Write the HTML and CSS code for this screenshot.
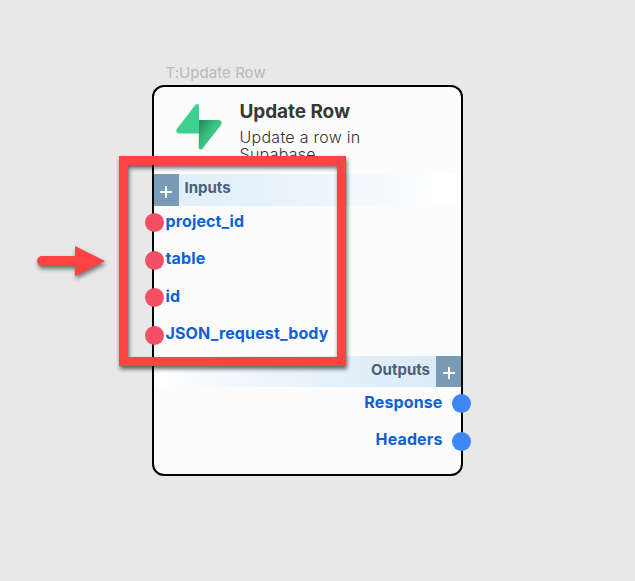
FILE: index.html
```html
<!DOCTYPE html>
<html lang="en">
<head>
<meta charset="utf-8">
<title>Update Row</title>
<link rel="stylesheet" href="styles.css">
</head>
<body>
<main class="canvas">
  <div class="node-label">T:Update Row</div>
  <section class="node">
    <header class="node-header">
      <svg class="logo" viewBox="0 0 46 48" width="46" height="48">
        <defs><linearGradient id="shade" x1="0" y1="0" x2=".5" y2=".45"><stop offset="0" stop-color="#23885b"/><stop offset="1" stop-color="#3bc483"/></linearGradient></defs>
        <path fill="#3fcf8e" d="M23 17V3.200C23 1 20.500.4 19.200 2L1.200 25.500C-.8 28 .5 30.500 3.500 30.500H23Z"/>
        <path fill="url(#shade)" d="M23 17H42.500C45.500 17 46.500 20 44.800 22.200L26.500 45.500C25.200 47.400 22.700 46.500 22.700 44.500Z"/>
      </svg>
      <div class="heading">
        <h1>Update Row</h1>
        <p>Update a row in Supabase</p>
      </div>
    </header>
    <div class="bar inputs"><span class="add"><svg width="14" height="14" viewBox="0 0 14 14"><path d="M7 1V13M1 7H13"/></svg></span><span class="bar-title">Inputs</span></div>
    <ul class="ports in">
      <li><i></i><span>project_id</span></li>
      <li><i></i><span>table</span></li>
      <li><i></i><span>id</span></li>
      <li><i></i><span>JSON_request_body</span></li>
    </ul>
    <div class="bar outputs"><span class="bar-title">Outputs</span><span class="add"><svg width="14" height="14" viewBox="0 0 14 14"><path d="M7 1V13M1 7H13"/></svg></span></div>
    <ul class="ports out">
      <li><span>Response</span><i></i></li>
      <li><span>Headers</span><i></i></li>
    </ul>
  </section>
  <div class="highlight"></div>
  <svg class="arrow" width="80" height="46" viewBox="0 0 80 46"><path d="M12 16H45V6L75 21L45 36V26H12A5 5 0 0 1 12 16Z"/></svg>
</main>
</body>
</html>
```
FILE: styles.css
```css
* { box-sizing: border-box; }
body { margin: 0; background: #e8e8e8; font-family: Inter, sans-serif; }
.canvas { position: relative; width: 635px; height: 581px; overflow: hidden; padding: 63px 0 0 151.500px; }
.node-label { height: 22px; padding-left: 14px; font-size: 15px; line-height: 20px; letter-spacing: .05px; color: #b9b9b9; white-space: nowrap; }
.node { width: 311.500px; height: 391px; border: 2px solid #000; border-radius: 12px; background: #fcfcfc; }
.node-header { display: flex; height: 87px; padding: 16px 0 0 22px; }
.logo { flex: none; }
.heading { width: 160px; height: 71px; margin-left: 18px; }
h1 { margin: 0; font-size: 19px; font-weight: 700; line-height: 18px; letter-spacing: -.08px; color: #383838; white-space: nowrap; }
p { width: 140px; margin: 8px 0 0; font-size: 16px; font-weight: 300; line-height: 17px; letter-spacing: .27px; color: #333; }
.bar { display: flex; height: 32px; }
.inputs { background: linear-gradient(90deg, #deeefa, #e7f2fb 40%, #fff 95%); }
.outputs { height: 31px; justify-content: flex-end; background: linear-gradient(270deg, #d8eaf7, #e7f2fb 50%, #fff); }
.add { display: flex; align-items: center; justify-content: center; width: 25px; padding-top: 3px; background: #789bb7; }
.add svg { fill: none; stroke: #fff; stroke-width: 2; }
.bar-title { margin: 0 6px; font-size: 15px; font-weight: 700; line-height: 28px; color: #4d6078; }
.ports { margin: 0; padding: 0; list-style: none; }
.ports li { display: flex; align-items: flex-start; height: 37.500px; font-size: 16px; font-weight: 700; line-height: 20px; letter-spacing: .13px; color: #105fd5; padding-top: 6px; }
.ports span { margin-top: -1px; }
.ports li:nth-child(even) span { margin-top: -2px; }
.ports i { flex: none; width: 19px; height: 19px; border-radius: 50%; margin-top: 1px; }
.in i { margin-left: -9px; margin-right: 2px; background: #f45064; }
.out li { justify-content: flex-end; }
.out i { margin-left: 9.500px; margin-right: -10px; background: #3b87f7; }
.highlight { position: absolute; left: 119px; top: 156px; width: 227px; height: 210px; border: 9px solid #ff4343; filter: drop-shadow(1px 3px 2px rgba(0,0,0,.6)); }
.arrow { position: absolute; left: 30px; top: 240px; fill: #ff4343; filter: drop-shadow(1px 3px 2px rgba(0,0,0,.5)); }
```
